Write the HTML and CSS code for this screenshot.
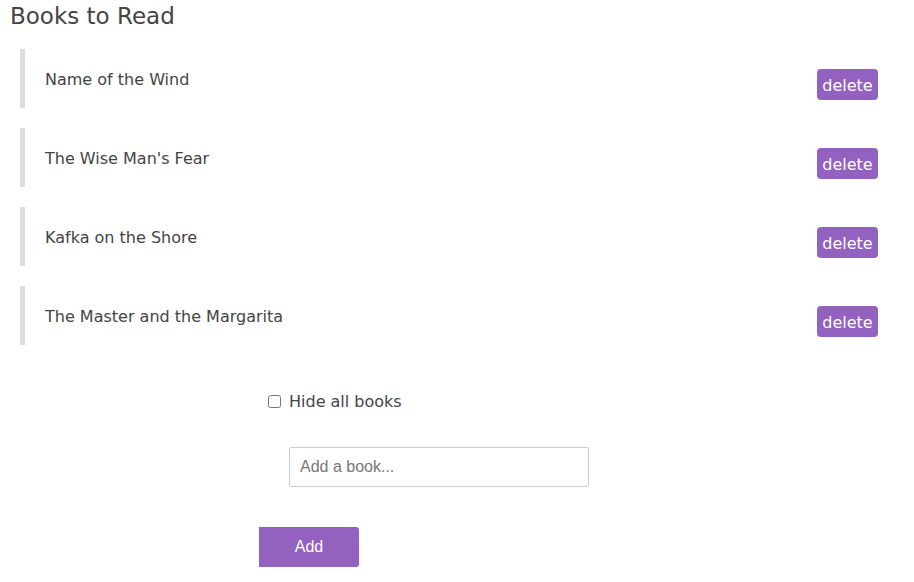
FILE: index.html
```html
<!DOCTYPE html>
<html>
<head>
<meta charset="utf-8">
<link rel="stylesheet" href="styles.css">
</head>
<body>
<div class="page">
  <h1 class="title">Books to Read</h1>
  <ul class="list">
    <li class="item"><span class="name">Name of the Wind</span><button class="delete">delete</button></li>
    <li class="item"><span class="name">The Wise Man's Fear</span><button class="delete">delete</button></li>
    <li class="item"><span class="name">Kafka on the Shore</span><button class="delete">delete</button></li>
    <li class="item"><span class="name">The Master and the Margarita</span><button class="delete">delete</button></li>
  </ul>
  <label class="hide"><input type="checkbox" class="check"><span>Hide all books</span></label>
  <form class="add-form">
    <input type="text" class="book-input" placeholder="Add a book...">
    <button type="button" class="add">Add</button>
  </form>
</div>
</body>
</html>
```
FILE: styles.css
```css
* { box-sizing: border-box; }
html, body { margin: 0; padding: 0; background: #fff; }
body { font-family: "DejaVu Sans", Verdana, sans-serif; color: #444; }
.page { padding: 0 36px 0 10px; }
.title {
  margin: 0;
  padding-top: 2px;
  font-size: 23px;
  font-weight: normal;
  line-height: 28px;
  color: #444;
  height: 31px;
}
.list { list-style: none; margin: 18px 0 0 10px; padding: 0; }
.item {
  display: flex;
  align-items: flex-start;
  justify-content: space-between;
  height: 59px;
  margin-bottom: 20px;
  border-left: 5px solid #ddd;
  padding-left: 20px;
}
.name { font-size: 16px; line-height: 20px; margin-top: 21px; }
.delete {
  margin-top: 20px;
  background: #9361bf;
  color: #fff;
  border: none;
  border-radius: 4px;
  font-family: "DejaVu Sans", Verdana, sans-serif;
  font-size: 16px;
  height: 31px;
  width: 61px;
  padding: 2px 0 0;
  line-height: 29px;
}
.hide { display: flex; align-items: center; margin: 46px 0 0 258px; font-size: 16px; height: 20px; }
.check { width: 13px; height: 13px; margin: 0 8px 0 0; }
.add-form { display: flex; flex-direction: column; align-items: flex-start; margin-top: 36px; }
.book-input {
  margin-left: 279px;
  width: 300px;
  height: 40px;
  border: 1px solid #ccc;
  border-radius: 2px;
  padding: 0 10px;
  font-family: "Liberation Sans", Arial, sans-serif;
  font-size: 16px;
  color: #444;
}
.book-input::placeholder { color: #777; }
.add {
  margin: 40px 0 0 249px;
  width: 100px;
  height: 40px;
  background: #9361bf;
  color: #fff;
  border: none;
  border-radius: 0 3px 3px 0;
  font-family: "Liberation Sans", Arial, sans-serif;
  font-size: 16px;
}
```
